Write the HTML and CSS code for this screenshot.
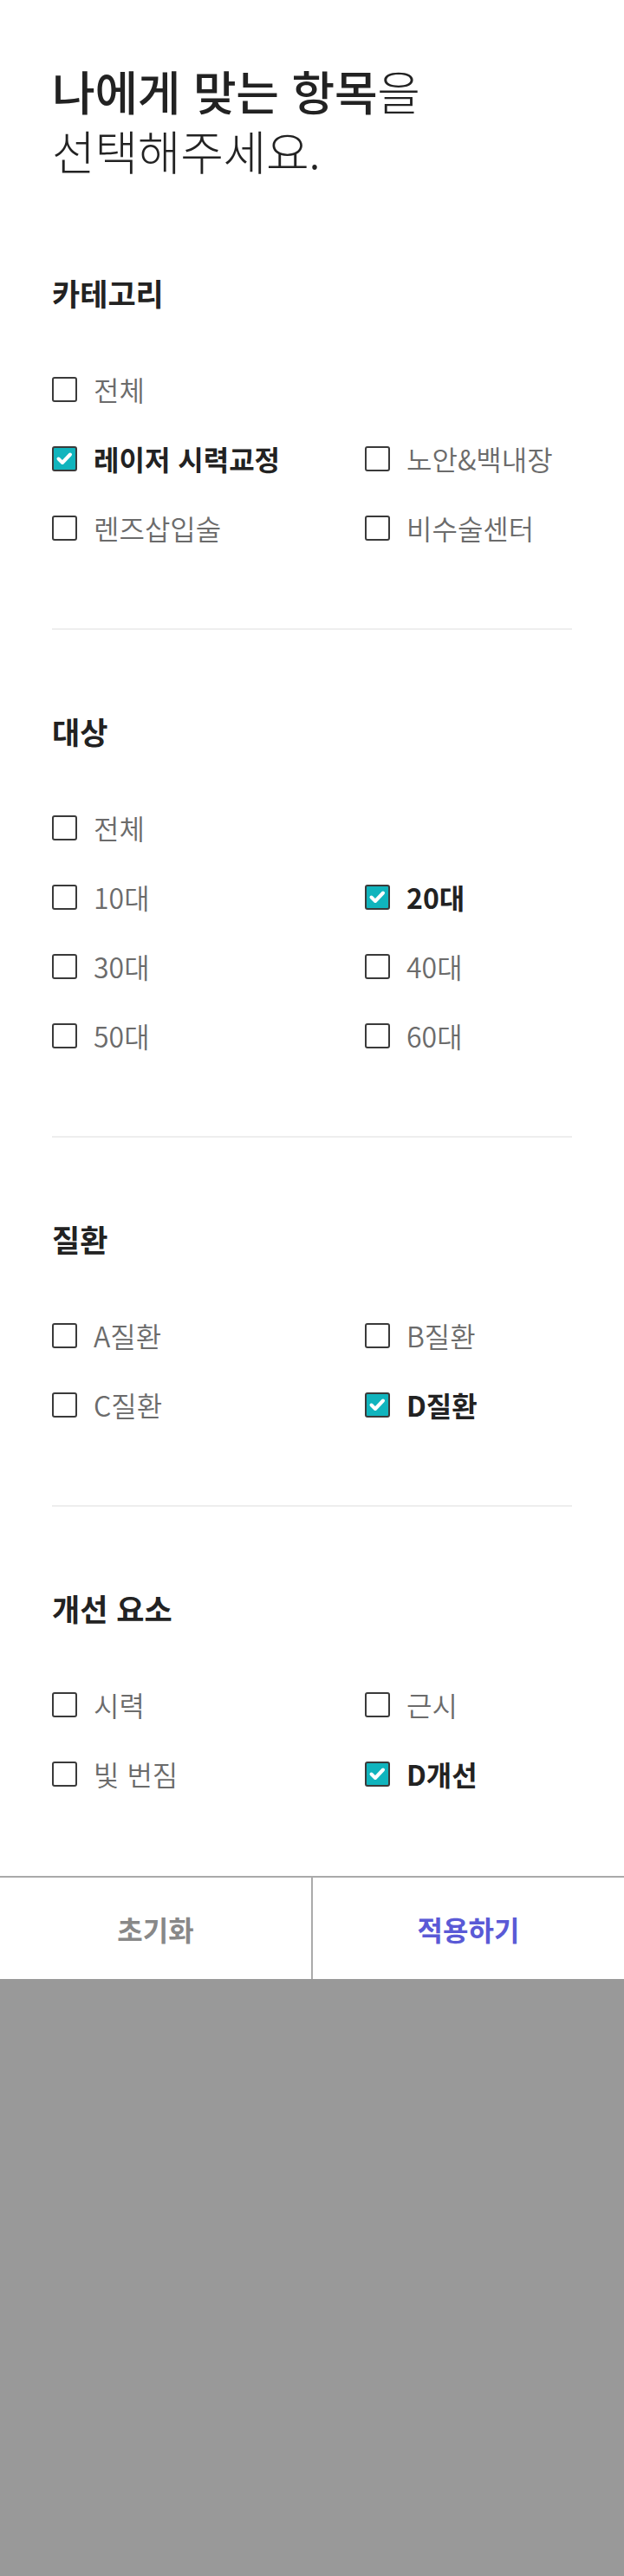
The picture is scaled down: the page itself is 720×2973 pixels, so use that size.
FILE: index.html
```html
<!DOCTYPE html>
<html lang="ko">
<head>
<meta charset="utf-8">
<title>맞춤 항목 선택</title>
<link rel="stylesheet" href="styles.css">
</head>
<body>
<div class="sheet">
  <h1 class="title"><span class="title-line"><span class="title-strong">나에게 맞는 항목</span>을</span><span class="title-line">선택해주세요.</span></h1>

  <section class="group group-first">
    <h2 class="group-title">카테고리</h2>
    <div class="options">
      <div class="option option-full"><span class="box"></span><span class="label">전체</span></div>
      <div class="option is-checked"><span class="box"><svg viewBox="0 0 29 29" class="tick"><polyline points="7.5,14.5 12,19 21,9.5"/></svg></span><span class="label">레이저 시력교정</span></div>
      <div class="option"><span class="box"></span><span class="label">노안&amp;백내장</span></div>
      <div class="option"><span class="box"></span><span class="label">렌즈삽입술</span></div>
      <div class="option"><span class="box"></span><span class="label">비수술센터</span></div>
    </div>
  </section>

  <section class="group">
    <h2 class="group-title">대상</h2>
    <div class="options">
      <div class="option option-full"><span class="box"></span><span class="label">전체</span></div>
      <div class="option"><span class="box"></span><span class="label">10대</span></div>
      <div class="option is-checked"><span class="box"><svg viewBox="0 0 29 29" class="tick"><polyline points="7.5,14.5 12,19 21,9.5"/></svg></span><span class="label">20대</span></div>
      <div class="option"><span class="box"></span><span class="label">30대</span></div>
      <div class="option"><span class="box"></span><span class="label">40대</span></div>
      <div class="option"><span class="box"></span><span class="label">50대</span></div>
      <div class="option"><span class="box"></span><span class="label">60대</span></div>
    </div>
  </section>

  <section class="group">
    <h2 class="group-title">질환</h2>
    <div class="options">
      <div class="option"><span class="box"></span><span class="label">A질환</span></div>
      <div class="option"><span class="box"></span><span class="label">B질환</span></div>
      <div class="option"><span class="box"></span><span class="label">C질환</span></div>
      <div class="option is-checked"><span class="box"><svg viewBox="0 0 29 29" class="tick"><polyline points="7.5,14.5 12,19 21,9.5"/></svg></span><span class="label">D질환</span></div>
    </div>
  </section>

  <section class="group group-last">
    <h2 class="group-title">개선 요소</h2>
    <div class="options">
      <div class="option"><span class="box"></span><span class="label">시력</span></div>
      <div class="option"><span class="box"></span><span class="label">근시</span></div>
      <div class="option"><span class="box"></span><span class="label">빛 번짐</span></div>
      <div class="option is-checked"><span class="box"><svg viewBox="0 0 29 29" class="tick"><polyline points="7.5,14.5 12,19 21,9.5"/></svg></span><span class="label">D개선</span></div>
    </div>
  </section>
</div>
<div class="actions">
  <button class="action action-reset" type="button">초기화</button>
  <button class="action action-apply" type="button">적용하기</button>
</div>
</body>
</html>
```

FILE: styles.css
```css
html, body {
  margin: 0;
  padding: 0;
}
body {
  background: #999999;
  font-family: "Noto Sans CJK KR", "Noto Sans", sans-serif;
  color: #222222;
}
.sheet {
  background: #ffffff;
  padding: 70px 60px 0;
}
.title {
  margin: 0;
  font-size: 54px;
  line-height: 69px;
  font-weight: 300;
  color: #222222;
  letter-spacing: -0.3px;
}
.title-line {
  display: block;
}
.title-strong {
  font-weight: 500;
}
.group {
  padding: 97px 0 96px;
  border-bottom: 2px solid #eeeeee;
}
.group-first {
  padding-top: 110px;
}
.group-last {
  border-bottom: none;
  padding-bottom: 98px;
}
.group-title {
  margin: 0;
  font-size: 35px;
  line-height: 40px;
  font-weight: 700;
  color: #222222;
}
.options {
  display: grid;
  grid-template-columns: 361px 1fr;
  row-gap: 40px;
  margin-top: 71px;
}
.option {
  display: flex;
  align-items: center;
  height: 40px;
}
.option-full {
  grid-column: 1 / -1;
}
.box {
  box-sizing: border-box;
  width: 29px;
  height: 29px;
  border: 2px solid #3a3a3a;
  border-radius: 3px;
  background: #ffffff;
  flex: none;
  display: flex;
}
.tick {
  margin: -2px;
  width: 29px;
  height: 29px;
}
.tick polyline {
  fill: none;
  stroke: #ffffff;
  stroke-width: 4;
  stroke-linecap: round;
  stroke-linejoin: round;
}
.is-checked .box {
  background: #10b4bd;
}
.label {
  margin-left: 19px;
  font-size: 32px;
  line-height: 40px;
  font-weight: 350;
  color: #6b6b6b;
  white-space: nowrap;
}
.is-checked .label {
  color: #222222;
  font-weight: 700;
}
.actions {
  display: flex;
  background: #ffffff;
  border-top: 2px solid #aaaaaa;
}
.action {
  flex: 1;
  height: 117px;
  border: none;
  background: #ffffff;
  font-family: "Noto Sans CJK KR", "Noto Sans", sans-serif;
  font-size: 32px;
  font-weight: 700;
  padding: 0;
  margin: 0;
}
.action-reset {
  color: #888888;
  border-right: 2px solid #aaaaaa;
}
.action-apply {
  color: #5a5ad6;
}
```
